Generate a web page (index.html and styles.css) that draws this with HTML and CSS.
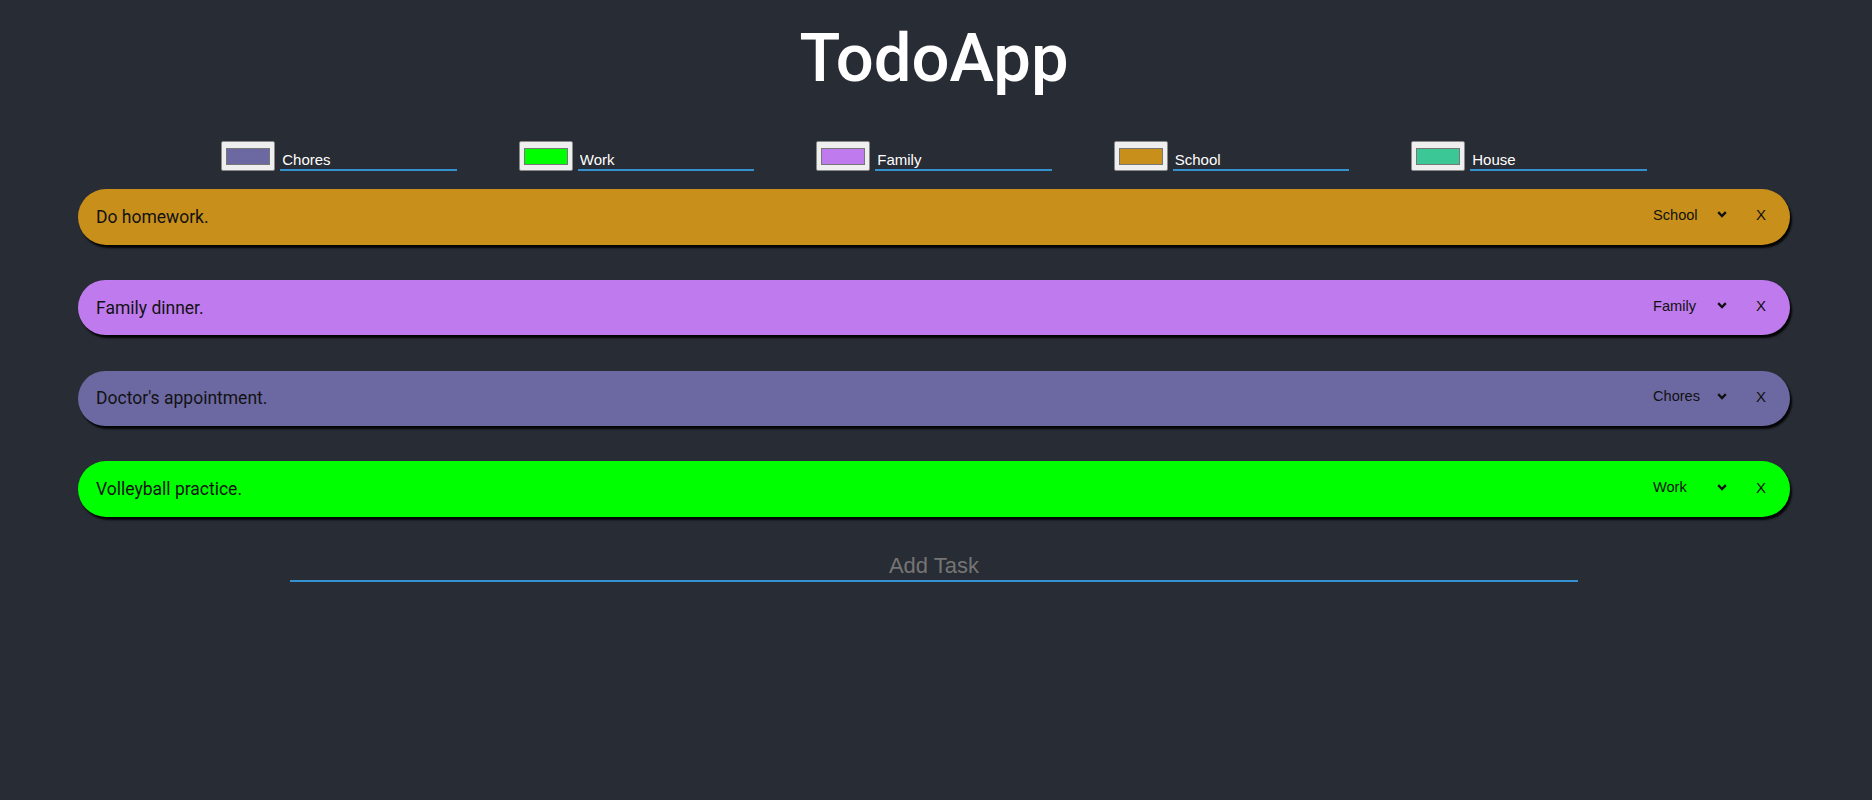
FILE: index.html
```html
<!DOCTYPE html>
<html lang="en">
<head>
<meta charset="utf-8">
<title>TodoApp</title>
<link rel="stylesheet" href="styles.css">
</head>
<body>
<div class="app">
  <h1 class="title">TodoApp</h1>
  <div class="categories">
    <div class="category">
      <span class="swatch-box"><span class="swatch chores"></span></span>
      <input class="cat-name" type="text" value="Chores">
    </div>
    <div class="category">
      <span class="swatch-box"><span class="swatch work"></span></span>
      <input class="cat-name" type="text" value="Work">
    </div>
    <div class="category">
      <span class="swatch-box"><span class="swatch family"></span></span>
      <input class="cat-name" type="text" value="Family">
    </div>
    <div class="category">
      <span class="swatch-box"><span class="swatch school"></span></span>
      <input class="cat-name" type="text" value="School">
    </div>
    <div class="category">
      <span class="swatch-box"><span class="swatch house"></span></span>
      <input class="cat-name" type="text" value="House">
    </div>
  </div>

  <ul class="tasks">
    <li class="task school">
      <span class="task-text">Do homework.</span>
      <div class="controls">
        <div class="select"><span class="select-label">School</span><svg class="chev" width="10" height="7" viewBox="0 0 10 7"><path d="M1.2 1.2 L5 5 L8.8 1.2" fill="none" stroke="#111" stroke-width="2.4"/></svg></div>
        <button class="del">X</button>
      </div>
    </li>
    <li class="task family">
      <span class="task-text">Family dinner.</span>
      <div class="controls">
        <div class="select"><span class="select-label">Family</span><svg class="chev" width="10" height="7" viewBox="0 0 10 7"><path d="M1.2 1.2 L5 5 L8.8 1.2" fill="none" stroke="#111" stroke-width="2.4"/></svg></div>
        <button class="del">X</button>
      </div>
    </li>
    <li class="task chores">
      <span class="task-text">Doctor's appointment.</span>
      <div class="controls">
        <div class="select"><span class="select-label">Chores</span><svg class="chev" width="10" height="7" viewBox="0 0 10 7"><path d="M1.2 1.2 L5 5 L8.8 1.2" fill="none" stroke="#111" stroke-width="2.4"/></svg></div>
        <button class="del">X</button>
      </div>
    </li>
    <li class="task work">
      <span class="task-text">Volleyball practice.</span>
      <div class="controls">
        <div class="select"><span class="select-label">Work</span><svg class="chev" width="10" height="7" viewBox="0 0 10 7"><path d="M1.2 1.2 L5 5 L8.8 1.2" fill="none" stroke="#111" stroke-width="2.4"/></svg></div>
        <button class="del">X</button>
      </div>
    </li>
  </ul>

  <input class="add-task" type="text" placeholder="Add Task">
</div>
</body>
</html>
```
FILE: styles.css
```css
* { box-sizing: border-box; }

html, body {
  margin: 0;
  padding: 0;
  background: #282c34;
  height: 100%;
}

.app {
  width: 1868px;
  display: flex;
  flex-direction: column;
  align-items: center;
}

.title {
  margin: 20px 0 0 0;
  font-family: Roboto, "Liberation Sans", sans-serif;
  font-weight: 500;
  font-size: 67px;
  line-height: 76px;
  color: #ffffff;
}

.categories {
  display: flex;
  gap: 62px;
  margin-top: 45px;
}

.category {
  display: flex;
  align-items: flex-end;
  gap: 5px;
}

.swatch-box {
  width: 54px;
  height: 30px;
  background: #efefef;
  border: 1px solid #8a8a8a;
  border-radius: 2px;
  display: flex;
  align-items: center;
  justify-content: center;
}

.swatch {
  width: 44px;
  height: 17px;
  border: 1px solid #777777;
}

.swatch.chores { background: #6c68a2; }
.swatch.work { background: #00ff00; }
.swatch.family { background: #bf7bed; }
.swatch.school { background: #c8901a; }
.swatch.house { background: #3bc896; }

.cat-name {
  width: 176.5px;
  height: 21px;
  padding: 0 0 0 2px;
  margin: 0;
  border: none;
  border-bottom: 2px solid #3490cf;
  background: transparent;
  color: #ffffff;
  font-family: "Liberation Sans", Arial, sans-serif;
  font-size: 15px;
  line-height: 19px;
  outline: none;
}

.tasks {
  list-style: none;
  margin: 18px 0 0 0;
  padding: 0;
  display: flex;
  flex-direction: column;
  gap: 35.3px;
}

.task {
  width: 1712px;
  height: 55.5px;
  border-radius: 28px;
  display: flex;
  align-items: center;
  justify-content: space-between;
  padding: 0 24px 0 18px;
  box-shadow: 2px 3px 2px rgba(0, 0, 0, 0.9);
}

.task.school { background: #c8901a; }
.task.family { background: #bf7bed; }
.task.chores { background: #6c68a2; }
.task.work { background: #00ff00; }

.task-text {
  font-family: Roboto, "Liberation Sans", sans-serif;
  font-size: 17.5px;
  color: #121214;
}

.controls {
  display: flex;
  align-items: center;
  padding-bottom: 4px;
}

.select {
  width: 84px;
  display: flex;
  align-items: center;
  justify-content: space-between;
  padding: 0 6px 0 4px;
  font-family: "Liberation Sans", Arial, sans-serif;
  font-size: 14.6px;
  color: #111111;
}

.chev { display: block; }

.del {
  margin-left: 23px;
  padding: 0;
  border: none;
  background: transparent;
  font-family: "Liberation Sans", Arial, sans-serif;
  font-size: 15px;
  color: #111111;
}

.add-task {
  width: 1288px;
  height: 30px;
  margin-top: 35.5px;
  padding: 0;
  border: none;
  border-bottom: 2px solid #3490cf;
  background: transparent;
  text-align: center;
  font-family: "Liberation Sans", Arial, sans-serif;
  font-size: 22px;
  line-height: 28px;
  color: #ffffff;
  outline: none;
}

.add-task::placeholder {
  color: #757575;
}
```
